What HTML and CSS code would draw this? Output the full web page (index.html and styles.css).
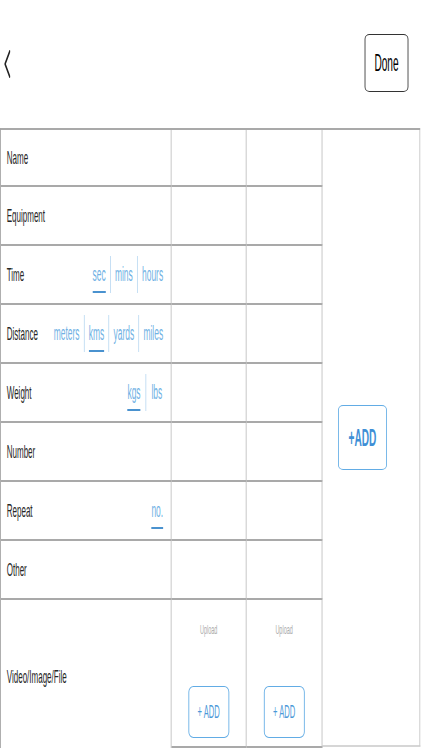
FILE: index.html
```html
<!DOCTYPE html>
<html lang="en">
<head>
    <meta charset="UTF-8">
    <meta name="viewport" content="width=device-width, initial-scale=1.0">
    <title>Exercise</title>
    <link rel="stylesheet" href="styles.css">
</head>
<body>
    <div class="frame">
    <!-- the whole screen is laid out wide and squeezed sideways, like the shot -->
    <div class="screen">
        <div class="topbar">
            <a class="back" href="#">
                <svg width="16" height="28" viewBox="0 0 16 28"><path d="M14 1.5 L3 14 L14 26.5" /></svg>
            </a>
            <button class="done">Done</button>
        </div>

        <div class="sheet">
            <div class="cell label first">Name</div>
            <div class="cell first"></div>
            <div class="cell first"></div>
            <div class="side"><button class="add-big">+ADD</button></div>

            <div class="cell label">Equipment</div>
            <div class="cell"></div>
            <div class="cell"></div>

            <div class="cell label">Time
                <div class="units">
                    <div class="unit on"><span>sec</span></div>
                    <div class="unit"><span>mins</span></div>
                    <div class="unit"><span>hours</span></div>
                </div>
            </div>
            <div class="cell"></div>
            <div class="cell"></div>

            <div class="cell label">Distance
                <div class="units">
                    <div class="unit"><span>meters</span></div>
                    <div class="unit on"><span>kms</span></div>
                    <div class="unit"><span>yards</span></div>
                    <div class="unit"><span>miles</span></div>
                </div>
            </div>
            <div class="cell"></div>
            <div class="cell"></div>

            <div class="cell label">Weight
                <div class="units wide">
                    <div class="unit on"><span>kgs</span></div>
                    <div class="unit"><span>lbs</span></div>
                </div>
            </div>
            <div class="cell"></div>
            <div class="cell"></div>

            <div class="cell label">Number</div>
            <div class="cell"></div>
            <div class="cell"></div>

            <div class="cell label">Repeat
                <div class="units">
                    <div class="unit on"><span>no.</span></div>
                </div>
            </div>
            <div class="cell"></div>
            <div class="cell"></div>

            <div class="cell label">Other</div>
            <div class="cell"></div>
            <div class="cell"></div>

            <div class="cell label last">Video/Image/File</div>
            <div class="cell upload">
                <p>Upload</p>
                <button class="add-small">+ ADD</button>
            </div>
            <div class="cell upload">
                <p>Upload</p>
                <button class="add-small">+ ADD</button>
            </div>
        </div>
    </div>
    </div>
</body>
</html>
```

FILE: styles.css
```css
*{padding: 0; margin: 0; box-sizing: border-box;}
html, body{overflow: hidden;}
body{background: #fff; font-family: "Liberation Sans", Arial, sans-serif; color: #333;}
button{font-family: inherit; background: #fff; cursor: pointer;}

.frame{width: 422px; height: 750px; overflow: hidden;}
.screen{width: 1000px; height: 750px; transform: scaleX(0.4215); transform-origin: 0 0;}

.topbar{display: flex; justify-content: space-between; align-items: center; height: 128px;}
.topbar .back{display: flex; margin-left: 9px;}
.topbar .back path{fill: none; stroke: #222; stroke-width: 3; stroke-linecap: round; stroke-linejoin: round;}
.topbar .done{width: 104px; height: 58px; margin-right: 31px; margin-bottom: 2px; border: solid #333; border-width: 1px 2px; border-radius: 12px / 5px; font-size: 24px; color: #000;}

.sheet{display: grid; grid-template-columns: 405px 178px 180px 232px; grid-template-rows: 57px repeat(7, 59px) 148px; width: 997px; border-top: 2px solid #a9a9a9; border-left: 2px solid #a0a0a0;}
.sheet .cell{border-bottom: 2px solid #a9a9a9; border-right: 2px solid #bdbdbd;}
.sheet .label{display: flex; align-items: center; padding: 0 8px 0 14px; font-size: 19px; color: #262626;}
.sheet .label.last{border-bottom: none; padding-top: 5px;}

.side{grid-column: 4; grid-row: 1 / span 9; display: flex; align-items: center; padding: 0 0 0 37px; border-right: 2px solid #c4c4c4; border-bottom: 2px solid #d6d6d6; margin-bottom: 1px;}
.add-big{width: 116px; height: 65px; border: solid #62ace5; border-width: 1px 2px; border-radius: 12px / 5px; font-size: 24px; font-weight: bold; color: #3e8fd6;}

.units{display: flex; margin-left: auto;}
.units .unit{display: flex; align-items: flex-end; height: 37px; padding: 0 10px; font-size: 20px; color: #6fb1e4;}
.units .unit + .unit{border-left: 2px solid #bcdaf2;}
.units .unit span{line-height: 24px; padding-bottom: 5px; border-bottom: 2px solid transparent;}
.units .unit.on span{border-bottom-color: #4a92cf;}
.units.wide .unit{padding: 0 12px;}

.upload{display: flex; flex-direction: column; align-items: center; padding: 22px 0 8px;}
.upload p{font-size: 13px; line-height: 16px; color: #aaa;}
.add-small{width: 97px; height: 52px; margin-top: auto; border: solid #62ace5; border-width: 1px 2px; border-radius: 12px / 6px; font-size: 18px; color: #4a98d8;}
```
